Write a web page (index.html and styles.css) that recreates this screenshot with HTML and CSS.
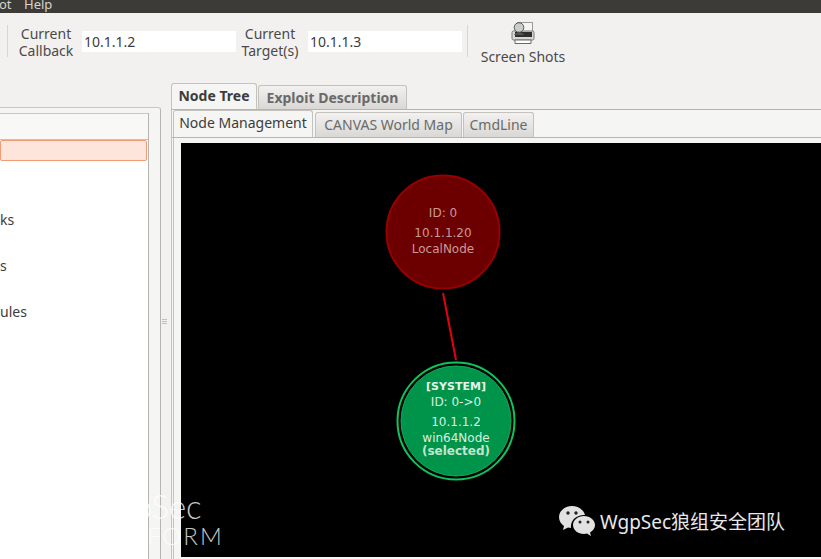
FILE: index.html
```html
<!DOCTYPE html>
<html lang="en">
<head>
    <meta charset="UTF-8">
    <meta name="viewport" content="width=device-width, initial-scale=1.0">
    <title>CANVAS</title>
    <link rel="stylesheet" href="styles.css">
</head>
<body>
    <div class="window">
        <!-- Menu bar, cut off by the top of the picture -->
        <div class="menubar">
            <span class="menu-tool">ot</span>
            <span class="menu-help">Help</span>
        </div>

        <div class="toolbar">
            <div class="sep"></div>
            <div class="field-label callback-label">Current<br>Callback</div>
            <div class="field-value">10.1.1.2</div>
            <div class="field-label target-label">Current<br>Target(s)</div>
            <div class="field-value">10.1.1.3</div>
            <div class="sep sep-right"></div>
            <div class="tool-button">
                <svg class="tool-icon" width="24" height="24" viewBox="0 0 24 24">
                    <rect x="6.5" y="1.5" width="15" height="13" fill="#f4f4f2" stroke="#9a9a98"/>
                    <rect x="1" y="10" width="22" height="9" rx="1.5" fill="#d8d8d6" stroke="#77797a"/>
                    <rect x="4" y="11" width="17" height="5" fill="#2e2e2e"/>
                    <path d="M4 19h16v3.5H4z" fill="#fff" stroke="#6a6a6a"/>
                    <circle cx="8" cy="6.500" r="4.800" fill="#c9cdcb" stroke="#555"/>
                    <path d="M3 14c1-3 9-3 10 0z" fill="#555"/>
                </svg>
                <span>Screen Shots</span>
            </div>
        </div>

        <div class="main">
            <div class="left-pane">
                <div class="left-frame">
                    <div class="tree">
                        <div class="tree-header"></div>
                        <div class="tree-selected"></div>
                        <div class="tree-row row-ks">ks</div>
                        <div class="tree-row">s</div>
                        <div class="tree-row">ules</div>
                    </div>
                </div>
            </div>

            <div class="handle"><i></i><i></i><i></i></div>

            <div class="right-pane">
                <div class="tabs outer-tabs">
                    <div class="tab tab-active bold">Node Tree</div>
                    <div class="tab bold tab-exploit">Exploit Description</div>
                </div>
                <div class="outer-panel">
                    <div class="tabs inner-tabs">
                        <div class="tab tab-active tab-nm">Node Management</div>
                        <div class="tab tab-map">CANVAS World Map</div>
                        <div class="tab tab-cmd">CmdLine</div>
                    </div>
                    <div class="inner-panel">
                        <svg class="node-canvas" width="641" height="414" viewBox="180 145 641 414">
                            <line x1="442" y1="295" x2="455" y2="362" class="edge"/>

                            <circle cx="442" cy="234" r="56.500" class="node-local"/>
                            <text x="442" y="219" class="node-text local-text">ID: 0</text>
                            <text x="442" y="239" class="node-text local-text">10.1.1.20</text>
                            <text x="442" y="255" class="node-text local-text">LocalNode</text>

                            <circle cx="455" cy="423" r="58.500" class="node-ring"/>
                            <circle cx="455" cy="423" r="55" class="node-target"/>
                            <text x="455" y="392" class="node-text small-bold">[SYSTEM]</text>
                            <text x="455" y="408" class="node-text target-text">ID: 0-&gt;0</text>
                            <text x="455" y="428" class="node-text target-text">10.1.1.2</text>
                            <text x="455" y="444" class="node-text target-text">win64Node</text>
                            <text x="455" y="457" class="node-text selected-text">(selected)</text>
                        </svg>
                    </div>
                </div>
            </div>
        </div>
    </div>

    <!-- Watermarks laid over the screenshot -->
    <div class="mark-left">
        <svg class="wolf" width="60" height="62" viewBox="0 0 60 62">
            <path d="M14 6l10 18h14L48 2l6 30 5 12-14 8-10 9h-9l-10-9L1 42l7-13z" fill="none" stroke="#fff" stroke-opacity=".55" stroke-width="1.200"/>
            <path d="M14 30l12 8-4 2zM46 30l-12 8 4 2zM30 42v10M22 50l8 4 8-4" fill="none" stroke="#fff" stroke-opacity=".55" stroke-width="1.200"/>
        </svg>
        <div class="mark-text">
            <div class="mark-name">WgpSec</div>
            <div class="mark-sub">PLATFORM</div>
        </div>
    </div>

    <div class="mark-right">
        <svg width="36" height="31" viewBox="0 0 36 31">
            <path d="M13 1C6 1 0 6 0 12c0 4 2 7 5 9l-1 4 5-2.500c1 .3 2 .4 3 .5C11 16 17 10 25 10h1C25 5 19 1 13 1z" fill="#e2e2e2"/>
            <path d="M25 11c-6 0-11 4-11 9s5 9 11 9c1 0 2-.1 3-.4l4 2.400-1-3.500c3-2 5-4.500 5-7.500 0-5-5-9-11-9z" fill="#e2e2e2"/>
            <circle cx="9" cy="8" r="1.700" fill="#222"/><circle cx="17" cy="8" r="1.700" fill="#222"/>
            <circle cx="21" cy="17" r="1.500" fill="#222"/><circle cx="29" cy="17" r="1.500" fill="#222"/>
        </svg>
        <span>WgpSec狼组安全团队</span>
    </div>
</body>
</html>
```

FILE: styles.css
```css
html, body {
    margin: 0;
    height: 100%;
    overflow: hidden;
}
body {
    position: relative;
    font-family: "Noto Sans", sans-serif;
    font-size: 14px;
    color: #3c3c3c;
    background-color: #f2f1f0;
}
.window {
    display: flex;
    flex-direction: column;
    height: 559px;
}

/* Menu bar */
.menubar {
    display: flex;
    flex: none;
    height: 13px;
    background-color: #3c3b37;
    color: #d6d4cd;
    font-size: 13px;
    line-height: 9px;
    overflow: hidden;
}
.menu-tool {
    width: 25px;
    margin-left: -1px;
}

/* Toolbar */
.toolbar {
    display: flex;
    flex: none;
    align-items: flex-start;
    height: 70px;
    box-sizing: border-box;
    padding-top: 12px;
    padding-left: 7px;
}
.sep {
    width: 1px;
    height: 32px;
    background-color: #d8d6d2;
}
.field-label {
    width: 72px;
    text-align: center;
    line-height: 17px;
    margin-top: 0;
    color: #4a4a48;
}
.callback-label {
    margin-left: 2px;
    margin-right: -3px;
}
.target-label {
    margin-left: -2px;
    margin-right: -1px;
    padding-left: 0;
}
.field-value {
    width: 154px;
    height: 21px;
    margin-top: 6px;
    margin-left: 3px;
    padding-left: 2px;
    box-sizing: border-box;
    background-color: #fff;
    line-height: 21px;
}
.sep-right {
    margin-left: 5px;
}
.tool-button {
    display: flex;
    flex-direction: column;
    align-items: center;
    width: 86px;
    margin-left: 12px;
    margin-top: -4px;
    color: #4a4a48;
}
.tool-icon {
    margin-bottom: 2px;
}

/* Main area */
.main {
    display: flex;
    flex: 1;
    min-height: 0;
}
.left-pane {
    width: 161px;
    flex: none;
    padding-top: 24px;
    box-sizing: border-box;
}
.left-frame {
    height: 100%;
    box-sizing: border-box;
    padding: 5px 5px 0 0;
    background-color: #f5f5f4;
    border-top: 1px solid #c8c6c2;
    border-right: 1px solid #b6b4ae;
    border-top-right-radius: 3px;
}
.tree {
    height: 100%;
    width: 149px;
    box-sizing: border-box;
    background-color: #fff;
    border-right: 1px solid #b6b4ae;
    border-top: 1px solid #c8c6c2;
}
.tree-header {
    height: 26px;
    border-bottom: 1px solid #c4c2bd;
    box-sizing: border-box;
    background-color: #f8f8f7;
}
.tree-selected {
    height: 21px;
    width: 147px;
    box-sizing: border-box;
    background-color: #fde5dc;
    border: 1px solid #f39a76;
    border-radius: 2px;
}
.tree-row {
    height: 46px;
    line-height: 20px;
}
.row-ks {
    margin-top: 49px;
}
.handle {
    display: flex;
    flex: none;
    flex-direction: column;
    justify-content: center;
    gap: 1px;
    align-items: center;
    width: 10px;
    padding-top: 0;
    padding-right: 4px;
    box-sizing: border-box;
}
.handle i {
    width: 5px;
    height: 1px;
    background-color: #c2c0bb;
}

/* Tabs */
.right-pane {
    display: flex;
    flex: 1;
    flex-direction: column;
    min-width: 0;
}
.tabs {
    display: flex;
    flex: none;
    align-items: flex-end;
}
.outer-tabs {
    height: 27px;
}
.inner-tabs {
    height: 28px;
    padding-left: 1px;
    padding-top: 1px;
    gap: 1px;
    box-sizing: border-box;
    border-bottom: 1px solid #b6b4ae;
}
.tab {
    height: 25px;
    box-sizing: border-box;
    padding: 0 6px;
    line-height: 24px;
    white-space: nowrap;
    color: #6a6a68;
    background: linear-gradient(#f2f1f0, #d9d8d5);
    border: 1px solid #c4c2bd;
    border-bottom: 0;
    border-radius: 3px 3px 0 0;
}
.tab-active {
    height: 27px;
    color: #3c3c3c;
    background: #f5f5f4;
}
.bold {
    font-weight: bold;
}
.outer-tabs .tab-active {
    width: 86px;
    text-align: center;
    padding: 0;
}
.tab-exploit {
    width: 149px;
    margin-left: 1px;
    text-align: center;
    padding: 0;
    border-bottom: 1px solid #b6b4ae;
}
.tab-nm {
    width: 140px;
    padding: 0;
    text-align: center;
}
.tab-map {
    width: 147px;
    padding: 0;
    text-align: center;
    margin-left: 1px;
}
.tab-cmd {
    width: 71px;
    padding: 0;
    text-align: center;
}
.outer-panel {
    display: flex;
    flex: 1;
    flex-direction: column;
    min-height: 0;
    border-top: 1px solid #b6b4ae;
    margin-top: -1px;
    background-color: #f5f5f4;
    border-left: 1px solid #c4c2bd;
}
.outer-panel .inner-tabs {
    margin-top: 0;
}
.inner-panel {
    flex: 1;
    min-height: 0;
    padding: 5px 0 0 7px;
    border-left: 1px solid #c4c2bd;
    margin-left: 1px;
}

/* Node diagram */
.node-canvas {
    display: block;
    background-color: #000;
}
.edge {
    stroke: #e4000f;
    stroke-width: 2;
}
.node-local {
    fill: #6c0000;
    stroke: #960000;
    stroke-width: 2;
}
.node-ring {
    fill: #000;
    stroke: #10c45c;
    stroke-width: 2;
}
.node-target {
    fill: #00944a;
    stroke: #14a858;
    stroke-width: 1;
}
.node-text {
    font-family: "DejaVu Sans", sans-serif;
    font-size: 12px;
    text-anchor: middle;
}
.local-text {
    fill: #c89a9a;
}
.target-text {
    fill: #d8f0e0;
}
.small-bold {
    fill: #e6f5ea;
    font-size: 11px;
    font-weight: bold;
}
.selected-text {
    fill: #c4e4d0;
    font-weight: bold;
}

/* Watermarks */
.mark-left {
    position: absolute;
    left: 21px;
    top: 488px;
    display: flex;
    gap: 4px;
    color: rgba(255, 255, 255, 0.78);
}
.mark-text {
    font-family: "Lato", sans-serif;
    margin-top: 2px;
}
.mark-name {
    font-size: 33px;
    line-height: 32px;
    font-weight: 300;
}
.mark-sub {
    font-size: 24px;
    line-height: 28px;
    font-weight: 300;
    letter-spacing: 2px;
}
.mark-right {
    position: absolute;
    left: 559px;
    top: 505px;
    display: flex;
    align-items: center;
    gap: 5px;
    font-family: "Noto Sans", "Noto Sans CJK SC", sans-serif;
    font-size: 19px;
    color: #e8e8e8;
}
```
